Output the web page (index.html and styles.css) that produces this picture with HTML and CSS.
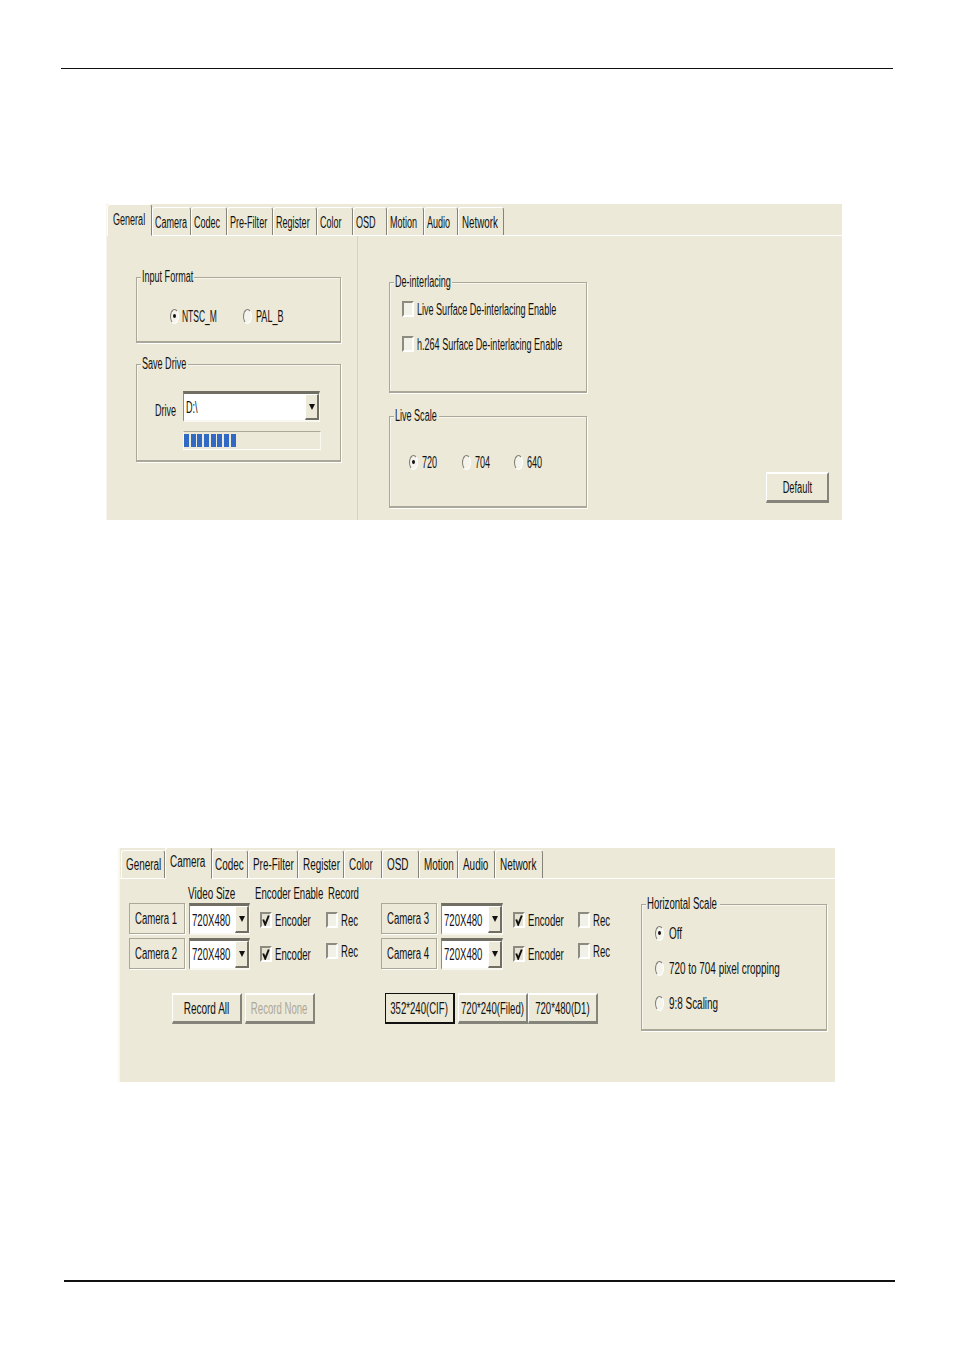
FILE: index.html
```html
<!DOCTYPE html>
<html lang="en">
<head>
<meta charset="utf-8">
<title>Settings dialogs</title>
<link rel="stylesheet" href="styles.css">
</head>
<body>
<div class="page">
  <div class="rule-top"></div>

  <section class="panel panel-a">
    <div class="tabs">
      <div class="tab active w-a0"><span class="t">General</span></div>
      <div class="tab w-a1"><span class="t">Camera</span></div>
      <div class="tab w-a2"><span class="t">Codec</span></div>
      <div class="tab w-a3"><span class="t">Pre-Filter</span></div>
      <div class="tab w-a4"><span class="t">Register</span></div>
      <div class="tab w-a5"><span class="t">Color</span></div>
      <div class="tab w-a6"><span class="t">OSD</span></div>
      <div class="tab w-a7"><span class="t">Motion</span></div>
      <div class="tab w-a8"><span class="t">Audio</span></div>
      <div class="tab w-a9"><span class="t">Network</span></div>
    </div>
    <div class="body-a">
      <div class="col-left">
        <div class="group g-input">
          <div class="legend l-input"><span class="t">Input Format</span></div>
          <div class="radios r-input">
            <div class="opt o-ntsc"><i class="radio on"></i><span class="t">NTSC_M</span></div>
            <div class="opt o-pal"><i class="radio"></i><span class="t">PAL_B</span></div>
          </div>
        </div>
        <div class="group g-save">
          <div class="legend l-save"><span class="t">Save Drive</span></div>
          <div class="drive-row">
            <div class="drive-label"><span class="t">Drive</span></div>
            <div class="combo combo-drive">
              <div class="combo-text small"><span class="t">D:\</span></div>
              <div class="combo-btn"><i class="arrow"></i></div>
            </div>
          </div>
          <div class="progress"><div class="progress-fill"></div></div>
        </div>
      </div>
      <div class="col-right">
        <div class="group g-deint">
          <div class="legend l-deint"><span class="t">De-interlacing</span></div>
          <div class="check-row cr-1"><i class="check"></i><span class="t">Live Surface De-interlacing Enable</span></div>
          <div class="check-row cr-2"><i class="check"></i><span class="t">h.264 Surface De-interlacing Enable</span></div>
        </div>
        <div class="group g-live">
          <div class="legend l-live"><span class="t">Live Scale</span></div>
          <div class="radios r-live">
            <div class="opt o-scale"><i class="radio on"></i><span class="t">720</span></div>
            <div class="opt o-scale"><i class="radio"></i><span class="t">704</span></div>
            <div class="opt o-scale"><i class="radio"></i><span class="t">640</span></div>
          </div>
        </div>
      </div>
      <div class="btn btn-default"><span class="t">Default</span></div>
    </div>
  </section>

  <section class="panel panel-b">
    <div class="tabs tabs-b">
      <div class="tab w-b0"><span class="t">General</span></div>
      <div class="tab active w-b1"><span class="t">Camera</span></div>
      <div class="tab w-b2"><span class="t">Codec</span></div>
      <div class="tab w-b3"><span class="t">Pre-Filter</span></div>
      <div class="tab w-b4"><span class="t">Register</span></div>
      <div class="tab w-b5"><span class="t">Color</span></div>
      <div class="tab w-b6"><span class="t">OSD</span></div>
      <div class="tab w-b7"><span class="t">Motion</span></div>
      <div class="tab w-b8"><span class="t">Audio</span></div>
      <div class="tab w-b9"><span class="t">Network</span></div>
    </div>
    <div class="body-b">
      <div class="cam-area">
        <div class="heads">
          <div class="head h-size"><span class="t">Video Size</span></div>
          <div class="head h-enc"><span class="t">Encoder Enable</span></div>
          <div class="head h-rec"><span class="t">Record</span></div>
        </div>
        <div class="cam-row">
          <div class="camset">
            <div class="cam"><span class="t">Camera 1</span></div>
            <div class="combo combo-size"><div class="combo-text"><span class="t">720X480</span></div><div class="combo-btn"><i class="arrow"></i></div></div>
            <div class="chk enc"><i class="check on"><svg class="tick" viewBox="0 0 8 12"><path d="M1.2 5.5 3.2 10.5 6.8 1.5"/></svg></i><span class="t">Encoder</span></div>
            <div class="chk rec"><i class="check"></i><span class="t">Rec</span></div>
          </div>
          <div class="camset set-b">
            <div class="cam"><span class="t">Camera 3</span></div>
            <div class="combo combo-size"><div class="combo-text"><span class="t">720X480</span></div><div class="combo-btn"><i class="arrow"></i></div></div>
            <div class="chk enc"><i class="check on"><svg class="tick" viewBox="0 0 8 12"><path d="M1.2 5.5 3.2 10.5 6.8 1.5"/></svg></i><span class="t">Encoder</span></div>
            <div class="chk rec"><i class="check"></i><span class="t">Rec</span></div>
          </div>
        </div>
        <div class="cam-row row-2">
          <div class="camset">
            <div class="cam"><span class="t">Camera 2</span></div>
            <div class="combo combo-size"><div class="combo-text"><span class="t">720X480</span></div><div class="combo-btn"><i class="arrow"></i></div></div>
            <div class="chk enc"><i class="check on"><svg class="tick" viewBox="0 0 8 12"><path d="M1.2 5.5 3.2 10.5 6.8 1.5"/></svg></i><span class="t">Encoder</span></div>
            <div class="chk rec up"><i class="check"></i><span class="t">Rec</span></div>
          </div>
          <div class="camset set-b">
            <div class="cam"><span class="t">Camera 4</span></div>
            <div class="combo combo-size"><div class="combo-text"><span class="t">720X480</span></div><div class="combo-btn"><i class="arrow"></i></div></div>
            <div class="chk enc"><i class="check on"><svg class="tick" viewBox="0 0 8 12"><path d="M1.2 5.5 3.2 10.5 6.8 1.5"/></svg></i><span class="t">Encoder</span></div>
            <div class="chk rec up"><i class="check"></i><span class="t">Rec</span></div>
          </div>
        </div>
        <div class="btn-row">
          <div class="btn b-rec"><span class="t">Record All</span></div>
          <div class="btn b-rec b-none"><span class="t">Record None</span></div>
          <div class="btn b-res b-first"><span class="t">352*240(CIF)</span></div>
          <div class="btn b-res b-second"><span class="t">720*240(Filed)</span></div>
          <div class="btn b-res b-third"><span class="t">720*480(D1)</span></div>
        </div>
      </div>
      <div class="group g-hscale">
        <div class="legend l-hscale"><span class="t">Horizontal Scale</span></div>
        <div class="opt o-h"><i class="radio on"></i><span class="t">Off</span></div>
        <div class="opt o-h"><i class="radio"></i><span class="t">720 to 704 pixel cropping</span></div>
        <div class="opt o-h"><i class="radio"></i><span class="t">9:8 Scaling</span></div>
      </div>
    </div>
  </section>

  <div class="rule-bottom"></div>
</div>
</body>
</html>
```
FILE: styles.css
```css
* { box-sizing: border-box; }
html, body { margin: 0; background: #fff; }
body { font-family: "Liberation Sans", Arial, sans-serif; color: #111; }
.page { width: 954px; height: 1352px; padding-top: 68px; overflow: hidden; }

.rule-top { width: 832px; height: 1px; margin-left: 61px; background: #111; }
.rule-bottom { width: 831px; height: 2px; margin: 198px 0 0 64px; background: #111; }

/* Squeezed label: the reference is a horizontally compressed capture */
.t {
  display: block;
  width: 100%;
  font-size: 16px;
  line-height: 16px;
  white-space: nowrap;
  transform: translateY(1px) scaleX(var(--sx));
  transform-origin: left center;
}

.panel { background: #ece9d8; }
.panel-a { --sx: .565; width: 736px; height: 316px; margin: 135px 0 0 106px; border-left: 1px solid #f6f5ee; display: flex; flex-direction: column; }
.panel-b { --sx: .6; width: 717px; height: 234px; margin: 328px 0 0 118px; border-left: 2px solid #f8f7f0; display: flex; flex-direction: column; }

/* Tabs */
.tabs { display: flex; height: 32px; flex: none; border-bottom: 1px solid #fff; align-items: flex-end; }
.tabs-b { height: 31px; padding-left: 1px; }
.tab {
  height: 28px;
  padding: 6px 0 0 2px;
  border-top: 1px solid #fff;
  border-left: 1px solid #fff;
  border-right: 1px solid #85847a;
  border-radius: 3px 3px 0 0;
  flex: none;
}
.tab .t { height: 16px; }
.tab.active { height: 32px; padding: 6px 0 0 5px; border-bottom: 1px solid #ece9d8; margin-bottom: -1px; }
.tabs-b .tab { padding: 5px 0 0 4px; --sx: .62; }
.tabs-b .tab.active { padding: 5px 0 0 4px; }
.tabs-b .w-b2 { padding-left: 2px; }
.w-a0 { width: 45px; }
.w-a1 { width: 39px; }
.w-a2 { width: 36px; }
.w-a3 { width: 46px; }
.w-a4 { width: 44px; }
.w-a5 { width: 36px; }
.w-a6 { width: 34px; }
.w-a7 { width: 37px; }
.w-a8 { width: 34px; }
.w-a9 { width: 46px; --sx: .61; padding-left: 3px; }
.w-b0 { width: 44px; }
.w-b1 { width: 47px; }
.w-b2 { width: 36px; }
.w-b3 { width: 50px; }
.w-b4 { width: 46px; }
.w-b5 { width: 38px; }
.w-b6 { width: 37px; }
.w-b7 { width: 39px; }
.w-b8 { width: 37px; }
.w-b9 { width: 48px; }

/* Group boxes */
.group { border: 1px solid #aca899; box-shadow: 1px 1px 0 #fff, inset 1px 1px 0 #f6f5ee; border-bottom-width: 2px; flex: none; }
.legend { height: 16px; margin: -10px 0 0 4px; padding-left: 1px; background: #ece9d8; }
.l-input { width: 53px; }
.l-save { width: 47px; }
.l-deint { width: 58px; }
.l-live { width: 45px; }
.l-hscale { width: 74px; }

/* Panel A */
.body-a { flex: 1; display: flex; min-height: 0; }
.col-left { width: 251px; padding: 41px 0 0 29px; border-right: 1px solid #d6d3c4; flex: none; }
.col-right { width: 229px; padding: 46px 0 0 31px; flex: none; }
.g-input { width: 205px; height: 66px; }
.g-save { width: 205px; height: 98px; margin-top: 21px; }
.g-deint { width: 198px; height: 111px; }
.g-live { width: 198px; height: 92px; margin-top: 23px; }

.radios { display: flex; }
.r-input { padding: 24px 0 0 33px; }
.r-live { padding: 31px 0 0 19px; }
.opt { display: flex; align-items: center; height: 16px; flex: none; }
.o-ntsc { width: 73px; --sx: .53; }
.o-pal { width: 50px; }
.o-scale { width: 52.5px; }
.opt .t { margin-left: 4px; width: 30px; }
.o-ntsc .t { margin-left: 3px; }

.radio {
  display: flex;
  width: 9px;
  height: 15px;
  flex: none;
  align-items: center;
  justify-content: center;
  border-radius: 50%;
  background: #f4f3ec;
  border: 1px solid;
  border-color: #7f7d72 #fff #fff #7f7d72;
}
.radio.on::after { content: ""; width: 3px; height: 4px; border-radius: 50%; background: #111; }

.check {
  display: flex;
  width: 12px;
  height: 16px;
  flex: none;
  align-items: center;
  justify-content: center;
  background: #f2f1e8;
  border-style: solid;
  border-width: 2px;
  border-color: #8d8b80 #fff #fff #8d8b80;
}
.check.on { background: #e6e3d3; }
.tick { width: 8px; height: 12px; display: block; }
.tick path { fill: none; stroke: #111; stroke-width: 2; }

.check-row { display: flex; align-items: center; height: 16px; margin-left: 12px; }
.check-row .t { margin-left: 3px; width: 150px; }
.cr-1 { margin-top: 12px; }
.cr-2 { margin-top: 19px; }

/* Combo */
.combo {
  display: flex;
  background: #fff;
  border-style: solid;
  border-width: 3px 1px 2px 1px;
  border-color: #716f64 #f8f7f0 #f8f7f0 #8d8b80;
  flex: none;
}
.combo-text { flex: 1; min-width: 0; padding: 6px 0 0 2px; }
.row-2 .combo-text { padding-top: 5px; }
.combo-text.small { padding: 5px 0 0 2px; }
.combo-btn {
  width: 14px;
  flex: none;
  display: flex;
  align-items: center;
  justify-content: center;
  background: #ece9d8;
  border-style: solid;
  border-width: 1px 2px 2px 1px;
  border-color: #fff #716f64 #716f64 #fff;
}
.arrow { width: 0; height: 0; border-style: solid; border-width: 6px 3.5px 0; border-color: #111 transparent transparent; }

.drive-row { display: flex; margin-top: 20px; padding-left: 18px; }
.drive-label { width: 28px; padding-top: 11px; }
.combo-drive { width: 137px; height: 31px; }
.progress { width: 138px; height: 19px; margin: 9px 0 0 46px; padding: 2px 0; border-top: 1px solid #aca899; border-bottom: 1px solid #fff; border-right: 1px solid #f8f7f0; border-left: 1px solid #f8f7f0; }
.progress-fill { width: 53px; height: 100%; background: repeating-linear-gradient(90deg, #316ac5 0 5px, #ece9d8 5px 6.65px); }

/* Buttons */
.btn {
  --sx: .625;
  display: flex;
  align-items: center;
  justify-content: center;
  flex: none;
  background: #ece9d8;
  border-style: solid;
  border-width: 2px 2px 3px 1px;
  border-color: #fff #85847a #85847a #fff;
}
.btn .t { width: auto; transform-origin: center; }
.btn-default { --sx: .58; width: 63px; height: 31px; margin: 236px 13px 0 auto; }

/* Panel B */
.body-b { flex: 1; display: flex; min-height: 0; }
.cam-area { width: 521px; flex: none; padding-left: 9px; }
.heads { display: flex; height: 16px; margin-top: 6px; }
.head { flex: none; }
.h-size { --sx: .62; width: 60px; margin-left: 59px; }
.h-enc { width: 73px; margin-left: 7px; }
.h-rec { width: 40px; }
.cam-row { margin-top: 2px; height: 32px; display: flex; }
.row-2 { margin-top: 3px; }
.camset { display: flex; width: 252px; flex: none; }
.cam {
  width: 56px;
  height: 31px;
  padding: 6px 0 0 5px;
  border: 1px solid #aca899;
  box-shadow: 1px 1px 0 #fff;
  flex: none;
}
.combo-size { width: 61px; height: 32px; margin-left: 4px; }
.set-b .combo-size { width: 62px; }
.chk { display: flex; align-items: center; height: 33px; flex: none; }
.row-2 .enc { height: 31px; }
.chk .t { margin-left: 3px; }
.enc { width: 53px; margin-left: 10px; }
.enc .t { width: 38px; }
.rec { width: 32px; margin-left: 13px; }
.set-b .rec { margin-left: 12px; }
.rec .t { width: 18px; }
.up { height: 26px; }

.btn-row { display: flex; height: 31px; margin-top: 23px; }
.b-rec { width: 70px; margin-left: 43px; }
.b-none { margin-left: 3px; color: #aca899; --sx: .6; }
.b-res { width: 70px; --sx: .6; }
.b-first { margin-left: 70px; border: 1px solid #111; border-bottom-width: 2px; border-right-width: 2px; }
.b-second { margin-left: 3px; }
.b-third { margin-left: 0; }

.g-hscale { width: 186px; height: 127px; margin-top: 25px; }
.o-h { margin: 14px 0 0 13px; --sx: .62; }
.o-h + .o-h { margin-top: 19px; }
.o-h .t { width: 120px; margin-left: 5px; }
```
